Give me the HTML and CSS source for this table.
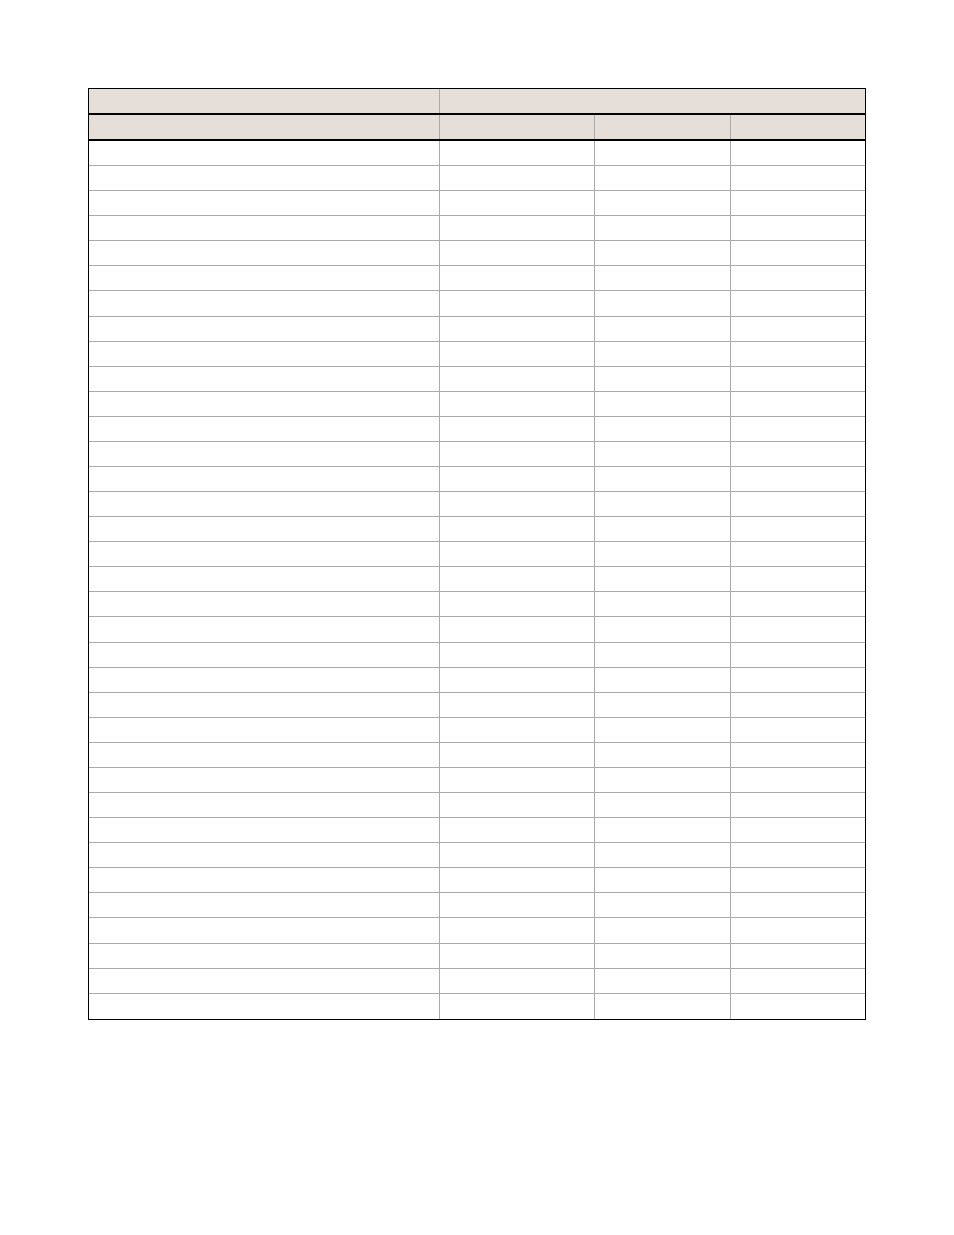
FILE: index.html
```html
<!DOCTYPE html>
<html>
<head>
<meta charset="utf-8">
<link rel="stylesheet" href="styles.css">
</head>
<body>
<div class="sheet">
  <div class="row head"><div class="c"></div><div class="c span3"></div></div>
  <div class="row head"><div class="c"></div><div class="c"></div><div class="c"></div><div class="c"></div></div>
  <div class="row body"><div class="c"></div><div class="c"></div><div class="c"></div><div class="c"></div></div>
  <div class="row body"><div class="c"></div><div class="c"></div><div class="c"></div><div class="c"></div></div>
  <div class="row body"><div class="c"></div><div class="c"></div><div class="c"></div><div class="c"></div></div>
  <div class="row body"><div class="c"></div><div class="c"></div><div class="c"></div><div class="c"></div></div>
  <div class="row body"><div class="c"></div><div class="c"></div><div class="c"></div><div class="c"></div></div>
  <div class="row body"><div class="c"></div><div class="c"></div><div class="c"></div><div class="c"></div></div>
  <div class="row body"><div class="c"></div><div class="c"></div><div class="c"></div><div class="c"></div></div>
  <div class="row body"><div class="c"></div><div class="c"></div><div class="c"></div><div class="c"></div></div>
  <div class="row body"><div class="c"></div><div class="c"></div><div class="c"></div><div class="c"></div></div>
  <div class="row body"><div class="c"></div><div class="c"></div><div class="c"></div><div class="c"></div></div>
  <div class="row body"><div class="c"></div><div class="c"></div><div class="c"></div><div class="c"></div></div>
  <div class="row body"><div class="c"></div><div class="c"></div><div class="c"></div><div class="c"></div></div>
  <div class="row body"><div class="c"></div><div class="c"></div><div class="c"></div><div class="c"></div></div>
  <div class="row body"><div class="c"></div><div class="c"></div><div class="c"></div><div class="c"></div></div>
  <div class="row body"><div class="c"></div><div class="c"></div><div class="c"></div><div class="c"></div></div>
  <div class="row body"><div class="c"></div><div class="c"></div><div class="c"></div><div class="c"></div></div>
  <div class="row body"><div class="c"></div><div class="c"></div><div class="c"></div><div class="c"></div></div>
  <div class="row body"><div class="c"></div><div class="c"></div><div class="c"></div><div class="c"></div></div>
  <div class="row body"><div class="c"></div><div class="c"></div><div class="c"></div><div class="c"></div></div>
  <div class="row body"><div class="c"></div><div class="c"></div><div class="c"></div><div class="c"></div></div>
  <div class="row body"><div class="c"></div><div class="c"></div><div class="c"></div><div class="c"></div></div>
  <div class="row body"><div class="c"></div><div class="c"></div><div class="c"></div><div class="c"></div></div>
  <div class="row body"><div class="c"></div><div class="c"></div><div class="c"></div><div class="c"></div></div>
  <div class="row body"><div class="c"></div><div class="c"></div><div class="c"></div><div class="c"></div></div>
  <div class="row body"><div class="c"></div><div class="c"></div><div class="c"></div><div class="c"></div></div>
  <div class="row body"><div class="c"></div><div class="c"></div><div class="c"></div><div class="c"></div></div>
  <div class="row body"><div class="c"></div><div class="c"></div><div class="c"></div><div class="c"></div></div>
  <div class="row body"><div class="c"></div><div class="c"></div><div class="c"></div><div class="c"></div></div>
  <div class="row body"><div class="c"></div><div class="c"></div><div class="c"></div><div class="c"></div></div>
  <div class="row body"><div class="c"></div><div class="c"></div><div class="c"></div><div class="c"></div></div>
  <div class="row body"><div class="c"></div><div class="c"></div><div class="c"></div><div class="c"></div></div>
  <div class="row body"><div class="c"></div><div class="c"></div><div class="c"></div><div class="c"></div></div>
  <div class="row body"><div class="c"></div><div class="c"></div><div class="c"></div><div class="c"></div></div>
  <div class="row body"><div class="c"></div><div class="c"></div><div class="c"></div><div class="c"></div></div>
  <div class="row body"><div class="c"></div><div class="c"></div><div class="c"></div><div class="c"></div></div>
</div>
</body>
</html>
```

FILE: styles.css
```css
html, body {
  margin: 0;
  padding: 0;
  background: #fff;
  font-family: "Liberation Sans", Arial, sans-serif;
}
.sheet {
  margin: 88px 0 0 88px;
  width: 778px;
  border: 1px solid #000;
  box-sizing: border-box;
}
.row {
  display: grid;
  grid-template-columns: 351px 155px 136px 134px;
  box-sizing: border-box;
}
.c {
  border-right: 1px solid #aaa;
  box-sizing: border-box;
}
.row .c:last-child {
  border-right: none;
}
.span3 {
  grid-column: 2 / 5;
}
.head {
  height: 26px;
  background: #e6ded8;
  border-bottom: 2px solid #000;
}
.body {
  height: 25.0857px;
  border-bottom: 1px solid #aaa;
}
.body:last-child {
  border-bottom: none;
}
```
